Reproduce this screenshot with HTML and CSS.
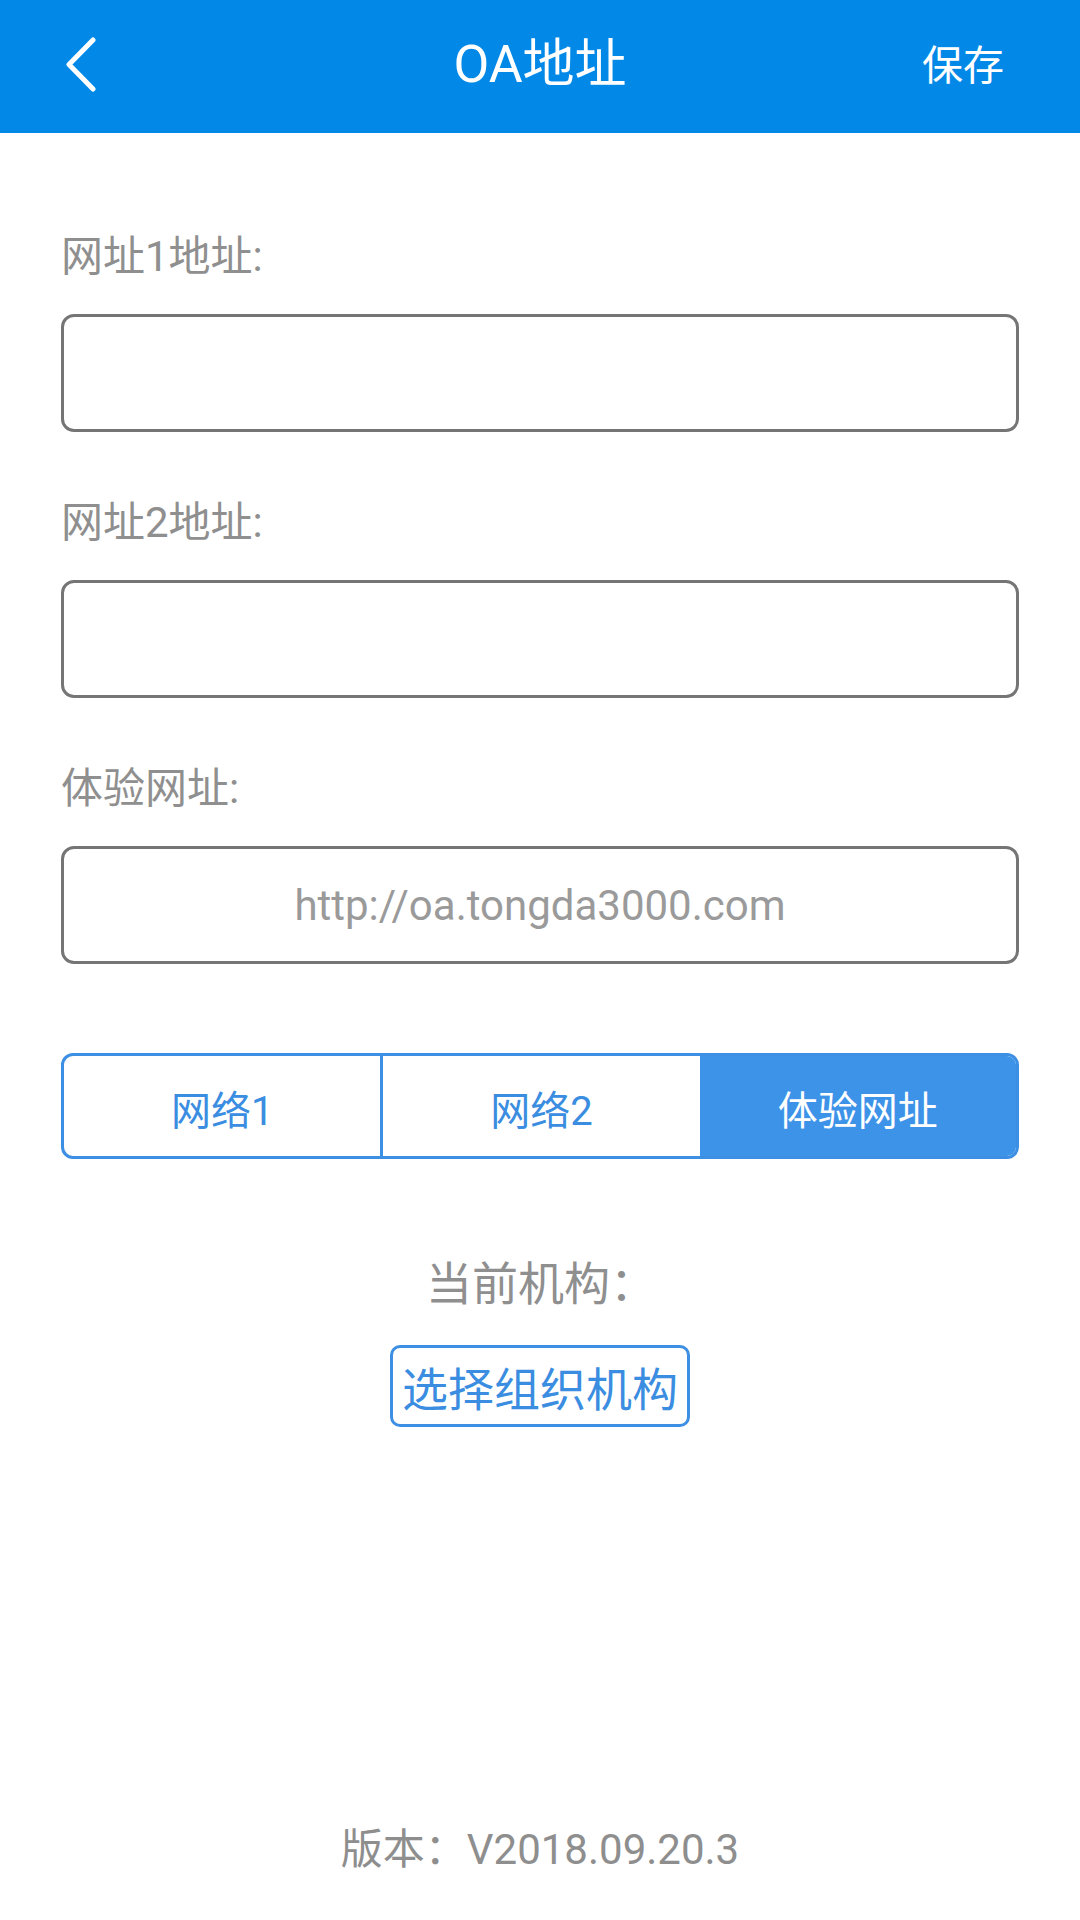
FILE: index.html
```html
<!DOCTYPE html>
<html lang="zh-CN">
<head>
<meta charset="utf-8">
<title>OA地址</title>
<link rel="stylesheet" href="styles.css">
</head>
<body>
<div class="page">
  <header class="topbar">
    <div class="topbar-left">
      <svg class="back-icon" width="32" height="56" viewBox="0 0 32 56" aria-hidden="true">
        <polyline points="28,3 4,27.5 28,52" fill="none" stroke="#ffffff" stroke-width="5" stroke-linecap="round" stroke-linejoin="round"/>
      </svg>
    </div>
    <div class="topbar-title">OA地址</div>
    <div class="topbar-right">保存</div>
  </header>

  <main class="content">
    <div class="field">
      <div class="field-label">网址1地址:</div>
      <input class="field-input" type="text">
    </div>
    <div class="field">
      <div class="field-label">网址2地址:</div>
      <input class="field-input" type="text">
    </div>
    <div class="field field-last">
      <div class="field-label">体验网址:</div>
      <input class="field-input" type="text" placeholder="http://oa.tongda3000.com">
    </div>

    <div class="segmented">
      <div class="segment">网络1</div>
      <div class="segment">网络2</div>
      <div class="segment segment-active">体验网址</div>
    </div>

    <div class="org">
      <div class="org-label">当前机构：</div>
      <div class="org-button">选择组织机构</div>
    </div>
  </main>

  <footer class="version">版本：V2018.09.20.3</footer>
</div>
</body>
</html>
```

FILE: styles.css
```css
html, body {
  margin: 0;
  padding: 0;
  background: #ffffff;
}

body {
  font-family: "Roboto", "Noto Sans CJK SC", sans-serif;
}

.page {
  width: 1080px;
  min-height: 1920px;
  display: flex;
  flex-direction: column;
}

.topbar {
  height: 133px;
  background: #0289e8;
  display: grid;
  grid-template-columns: 1fr auto 1fr;
  align-items: center;
  color: #ffffff;
}

.topbar-left {
  padding-left: 65px;
  display: flex;
  align-items: center;
  padding-top: 4px;
  padding-bottom: 8px;
}

.back-icon {
  display: block;
}

.topbar-title {
  font-size: 52px;
  line-height: 60px;
  padding-bottom: 4px;
}

.topbar-right {
  justify-self: end;
  padding-right: 76px;
  font-size: 41px;
  line-height: 50px;
  padding-bottom: 2px;
}

.content {
  padding: 99px 61px 0;
  display: flex;
  flex-direction: column;
}

.field {
  display: flex;
  flex-direction: column;
  gap: 32px;
  margin-bottom: 66px;
}

.field-last {
  margin-bottom: 89px;
}

.field-label {
  font-size: 42px;
  line-height: 50px;
  color: #8f8f8f;
}

.field-input {
  box-sizing: border-box;
  width: 958px;
  height: 118px;
  margin: 0;
  border: 3px solid #757575;
  border-radius: 13px;
  background: #ffffff;
  font-family: "Roboto", "Noto Sans CJK SC", sans-serif;
  font-size: 42px;
  text-align: center;
  color: #444444;
  outline: none;
  padding: 0 20px;
}

.field-input::placeholder {
  color: #9a9a9a;
  opacity: 1;
}

.segmented {
  box-sizing: border-box;
  height: 106px;
  border: 3px solid #3d8fe3;
  border-radius: 12px;
  overflow: hidden;
  display: flex;
}

.segment {
  flex: 1 1 0;
  display: flex;
  align-items: center;
  justify-content: center;
  font-size: 40px;
  color: #3a8de0;
  padding-top: 4px;
}

.segment + .segment {
  border-left: 3px solid #3d8fe3;
}

.segment-active {
  background: #3d93e8;
  color: #ffffff;
  border-left: none !important;
}

.org {
  margin-top: 97px;
  display: flex;
  flex-direction: column;
  align-items: center;
  gap: 33px;
}

.org-label {
  font-size: 46px;
  line-height: 56px;
  color: #8f8f8f;
  padding-left: 2px;
}

.org-button {
  box-sizing: border-box;
  height: 82px;
  padding: 0 9px;
  border: 3px solid #3d8fe3;
  border-radius: 10px;
  display: flex;
  align-items: center;
  font-size: 46px;
  color: #3a8de0;
}

.version {
  margin-top: auto;
  padding-bottom: 46px;
  text-align: center;
  font-size: 42px;
  line-height: 48px;
  color: #8e8e8e;
}
```
